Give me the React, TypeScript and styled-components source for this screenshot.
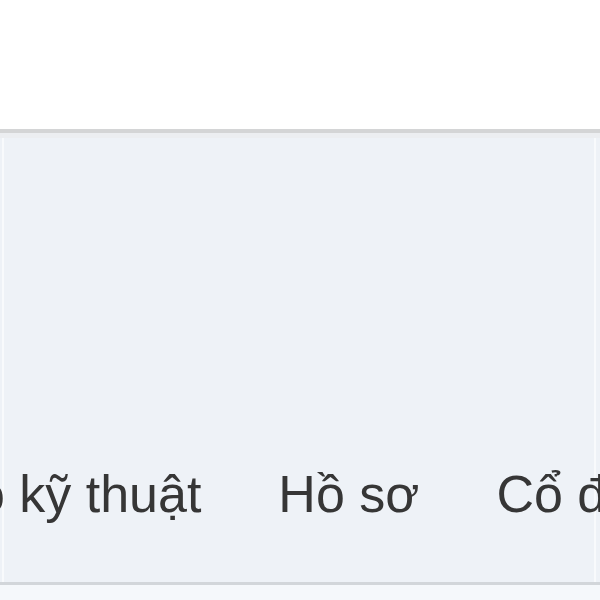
import React from "react";
import styled, { createGlobalStyle } from "styled-components";

const Global = createGlobalStyle`
  html, body { margin: 0; padding: 0; background: #ffffff; }
  body { font-family: "Liberation Sans", Arial, sans-serif; }
`;

const Page = styled.div`
  width: 600px;
  height: 600px;
  overflow: hidden;
  display: flex;
  flex-direction: column;
  background: #ffffff;
`;

const Header = styled.header`
  height: 129px;
  flex: none;
  background: #ffffff;
`;

const NavBar = styled.nav`
  flex: none;
  height: 449px;
  border-top: 4px solid #d4d5d6;
  border-bottom: 3px solid #d2d6da;
  background-color: #eef2f7;
  background-image:
    linear-gradient(to bottom, #eceef1 0, #eceef1 5px, transparent 5px),
    linear-gradient(to right, transparent 2px, #f8fafc 2px, #f8fafc 4px, transparent 4px),
    linear-gradient(to left, transparent 4px, #f8fafc 4px, #f8fafc 6px, transparent 6px);
  display: flex;
  align-items: flex-end;
  overflow: hidden;
`;

const Menu = styled.ul`
  list-style: none;
  margin: 0 0 0 -186px;
  padding: 0 0 58px 0;
  display: flex;
  gap: 77px;
  white-space: nowrap;
`;

const MenuItem = styled.li`
  font-size: 52px;
  line-height: 60px;
  color: #363636;
`;

const Footer = styled.div`
  flex: 1;
  background: #f5f8fb;
`;

const items = ["Báo cáo kỹ thuật", "Hồ sơ", "Cổ đông"];

export default function App() {
  return (
    <Page>
      <Global />
      <Header />
      <NavBar>
        <Menu>
          {items.map((t) => (
            <MenuItem key={t}>{t}</MenuItem>
          ))}
        </Menu>
      </NavBar>
      <Footer />
    </Page>
  );
}
